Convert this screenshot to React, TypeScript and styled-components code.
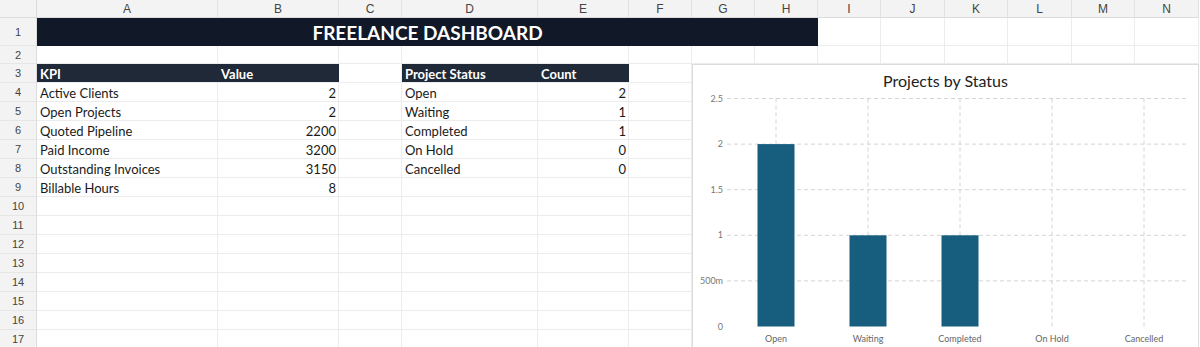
import styled, { createGlobalStyle } from 'styled-components';

const GlobalStyle = createGlobalStyle`
  html, body {
    margin: 0;
    padding: 0;
    background: #ffffff;
  }
  * {
    box-sizing: border-box;
  }
`;

const COLS = ['A', 'B', 'C', 'D', 'E', 'F', 'G', 'H', 'I', 'J', 'K', 'L', 'M', 'N'];
const ROW_COUNT = 17;

const kpis = [
  { label: 'Active Clients', value: 2 },
  { label: 'Open Projects', value: 2 },
  { label: 'Quoted Pipeline', value: 2200 },
  { label: 'Paid Income', value: 3200 },
  { label: 'Outstanding Invoices', value: 3150 },
  { label: 'Billable Hours', value: 8 },
];

const statuses = [
  { label: 'Open', count: 2 },
  { label: 'Waiting', count: 1 },
  { label: 'Completed', count: 1 },
  { label: 'On Hold', count: 0 },
  { label: 'Cancelled', count: 0 },
];

const Sheet = styled.div`
  display: grid;
  grid-template-columns: 37px 181px 121px 63px 136px 91px 63px 63px 63px 63px 64px 63px 64px 63px 64px;
  grid-template-rows: 18px 28px 18px repeat(15, 19px);
  width: 1200px;
  height: 347px;
  overflow: hidden;
  font-family: Lato, 'Open Sans', sans-serif;
  color: #1a1a1a;
`;

const Corner = styled.div`
  grid-column: 1;
  grid-row: 1;
  background: #f3f3f3;
  border-right: 1px solid #dcdcdc;
  border-bottom: 1px solid #dcdcdc;
`;

const ColHead = styled.div<{ $col: number }>`
  grid-column: ${({ $col }) => $col};
  grid-row: 1;
  background: #f3f3f3;
  border-right: 1px solid #e2e2e2;
  border-bottom: 1px solid #dcdcdc;
  display: flex;
  align-items: center;
  justify-content: center;
  font-family: 'Liberation Sans', Arial, sans-serif;
  font-size: 12px;
  color: #444;
`;

const RowHead = styled.div<{ $row: number }>`
  grid-column: 1;
  grid-row: ${({ $row }) => $row};
  background: #f3f3f3;
  border-right: 1px solid #dcdcdc;
  border-bottom: 1px solid #e6e6e6;
  display: flex;
  align-items: center;
  justify-content: center;
  font-family: 'Liberation Sans', Arial, sans-serif;
  font-size: 11px;
  color: #444;
`;

const Cell = styled.div<{ $col: number; $row: number; $align?: 'left' | 'right' }>`
  grid-column: ${({ $col }) => $col};
  grid-row: ${({ $row }) => $row};
  border-right: 1px solid #ececec;
  border-bottom: 1px solid #ececec;
  display: flex;
  align-items: center;
  justify-content: ${({ $align }) => ($align === 'right' ? 'flex-end' : 'flex-start')};
  padding: 1px 2px 0 3px;
  font-size: 13px;
  white-space: nowrap;
  overflow: visible;
`;

const TitleBand = styled.div`
  grid-column: 2 / 10;
  grid-row: 2;
  background: #111827;
  color: #ffffff;
  display: flex;
  align-items: center;
  justify-content: center;
  font-weight: 700;
  font-size: 19px;
  padding-top: 1px;
  z-index: 1;
`;

const TableHead = styled.div<{ $col: number }>`
  grid-column: ${({ $col }) => $col};
  grid-row: 4;
  background: #1f2937;
  color: #ffffff;
  font-weight: 700;
  font-size: 13px;
  display: flex;
  align-items: center;
  padding: 1px 3px 0;
  border-bottom: 1px solid #ececec;
  z-index: 1;
`;

const Chart = styled.div`
  grid-column: 8 / 16;
  grid-row: 4 / 19;
  background: #ffffff;
  border: 1px solid #dcdcdc;
  display: flex;
  flex-direction: column;
  z-index: 2;
`;

const ChartTitle = styled.div`
  height: 28px;
  display: flex;
  align-items: flex-end;
  justify-content: center;
  font-size: 16px;
  color: #222;
  padding-bottom: 3px;
`;

const ChartSvg = styled.svg`
  display: block;
  flex: 1;
  font-family: Lato, 'Open Sans', sans-serif;
`;

function BarChart() {
  const zeroY = 232;
  const unit = 91.2;
  const centers = [83, 175, 267, 359, 451];
  const ticks = [
    { v: 2.5, label: '2.5' },
    { v: 2, label: '2' },
    { v: 1.5, label: '1.5' },
    { v: 1, label: '1' },
    { v: 0.5, label: '500m' },
    { v: 0, label: '0' },
  ];
  const topY = zeroY - 2.5 * unit;

  return (
    <ChartSvg width="506" height="252" viewBox="0 0 506 252">
      {ticks.map((t) => {
        const y = zeroY - t.v * unit;
        return (
          <g key={t.label}>
            {t.v > 0 && (
              <line x1="34" x2="495" y1={y} y2={y} stroke="#d4d4d4" strokeWidth="1" strokeDasharray="4 3" />
            )}
            <text x="30" y={y + 3} textAnchor="end" fontSize="9" fill="#777">
              {t.label}
            </text>
          </g>
        );
      })}
      {centers.map((c) => (
        <line key={c} x1={c} x2={c} y1={topY} y2={zeroY} stroke="#d4d4d4" strokeWidth="1" strokeDasharray="4 3" />
      ))}
      {statuses.map((s, i) => {
        const h = s.count * unit;
        return (
          <g key={s.label}>
            {s.count > 0 && (
              <rect x={centers[i] - 18.5} y={zeroY - h} width="37" height={h} fill="#165d7e" />
            )}
            <text x={centers[i]} y={zeroY + 15} textAnchor="middle" fontSize="9" fill="#666">
              {s.label}
            </text>
          </g>
        );
      })}
    </ChartSvg>
  );
}

export default function App() {
  const cells = [];
  for (let r = 2; r <= ROW_COUNT + 1; r++) {
    for (let c = 2; c <= 15; c++) {
      cells.push(<Cell key={`${r}-${c}`} $col={c} $row={r} />);
    }
  }

  return (
    <>
      <GlobalStyle />
      <Sheet>
        <Corner />
        {COLS.map((letter, i) => (
          <ColHead key={letter} $col={i + 2}>
            {letter}
          </ColHead>
        ))}
        {Array.from({ length: ROW_COUNT }, (_, i) => (
          <RowHead key={i} $row={i + 2}>
            {i + 1}
          </RowHead>
        ))}
        {cells}

        <TitleBand>FREELANCE DASHBOARD</TitleBand>

        <TableHead $col={2}>KPI</TableHead>
        <TableHead $col={3}>Value</TableHead>
        <TableHead $col={5}>Project Status</TableHead>
        <TableHead $col={6}>Count</TableHead>

        {kpis.map((k, i) => (
          <Cell key={k.label} $col={2} $row={i + 5}>
            {k.label}
          </Cell>
        ))}
        {kpis.map((k, i) => (
          <Cell key={`${k.label}-v`} $col={3} $row={i + 5} $align="right">
            {k.value}
          </Cell>
        ))}
        {statuses.map((s, i) => (
          <Cell key={s.label} $col={5} $row={i + 5}>
            {s.label}
          </Cell>
        ))}
        {statuses.map((s, i) => (
          <Cell key={`${s.label}-c`} $col={6} $row={i + 5} $align="right">
            {s.count}
          </Cell>
        ))}

        <Chart>
          <ChartTitle>Projects by Status</ChartTitle>
          <BarChart />
        </Chart>
      </Sheet>
    </>
  );
}
